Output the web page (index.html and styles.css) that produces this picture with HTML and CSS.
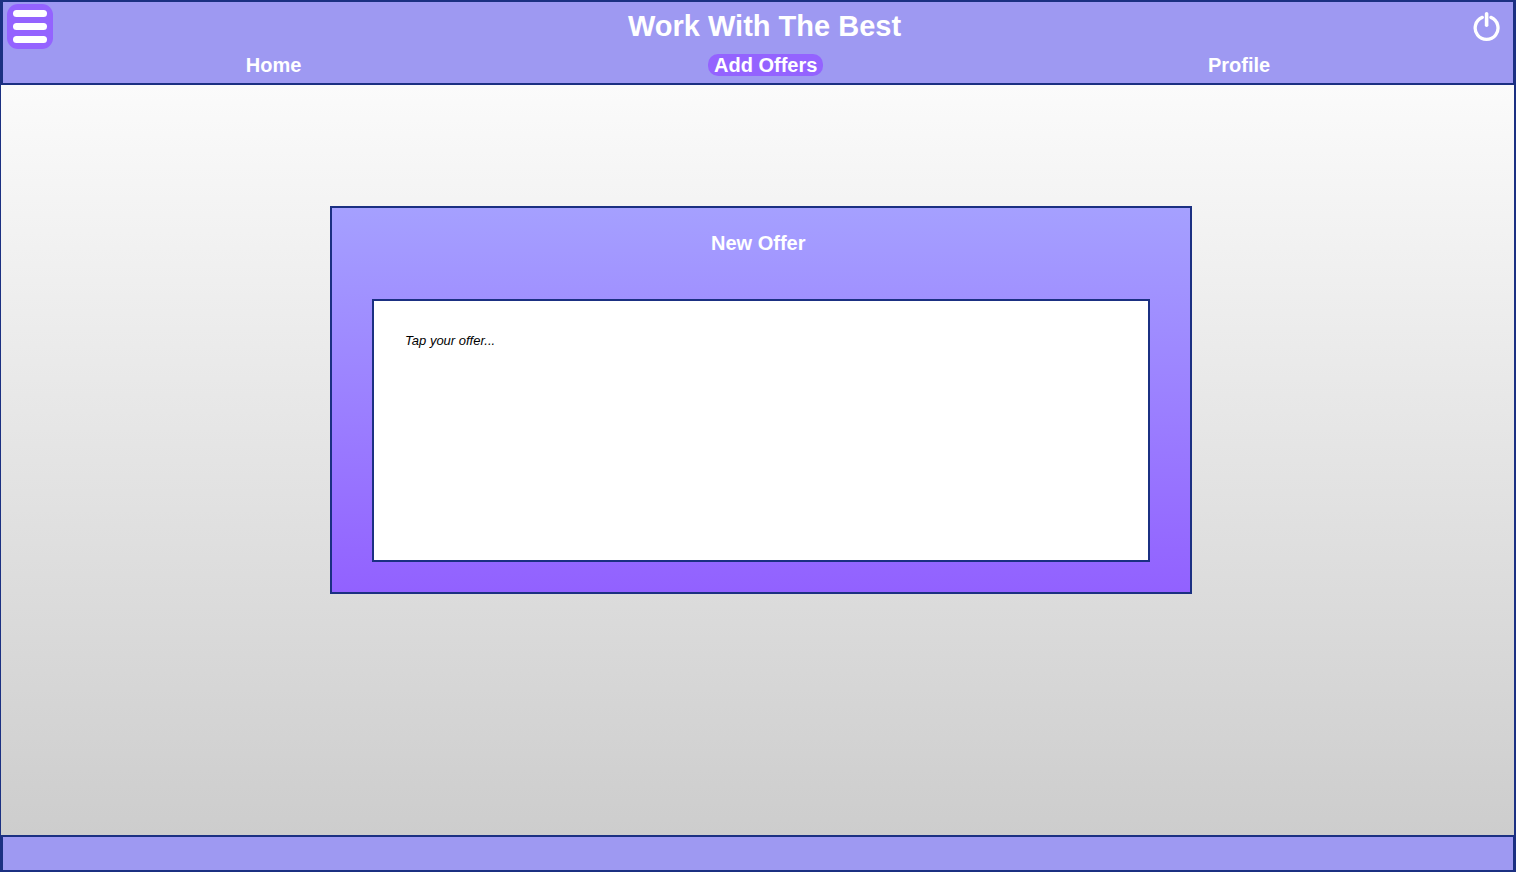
FILE: index.html
```html
<!DOCTYPE html>
<html lang="en">
<head>
<meta charset="utf-8">
<meta name="viewport" content="width=device-width, initial-scale=1">
<title>Work With The Best</title>
<link rel="stylesheet" href="styles.css">
</head>
<body class="page">
<header class="header">
  <div class="topbar">
    <button class="menu-button" type="button" aria-label="Menu">
      <span class="menu-bar"></span>
      <span class="menu-bar"></span>
      <span class="menu-bar"></span>
    </button>
    <h1 class="title">Work With The Best</h1>
    <button class="power-button" type="button" aria-label="Log out">
      <svg width="28" height="33" viewBox="0 0 28 33" fill="none" stroke="#fff" stroke-width="3.3" stroke-linecap="round">
        <path d="M9.3 7.4A11.4 11.4 0 1 0 17.9 7.4"/>
        <path d="M13.6 3.8V15.2" stroke-width="3.6"/>
      </svg>
    </button>
  </div>
  <nav class="nav">
    <a class="nav-link" href="#home">Home</a>
    <a class="nav-link nav-link-active" href="#offers" aria-current="page">Add Offers</a>
    <a class="nav-link" href="#profile">Profile</a>
  </nav>
</header>
<main class="main">
  <form class="card">
    <label class="card-title" for="offer">New Offer</label>
    <textarea class="offer" id="offer" placeholder="Tap your offer..."></textarea>
  </form>
</main>
<footer class="footer"></footer>
</body>
</html>
```
FILE: styles.css
```css
* {
  box-sizing: border-box;
}

.page {
  display: flex;
  flex-direction: column;
  min-height: 100vh;
  margin: 0;
  border: solid #1b3082;
  border-width: 0 2px 0 1px;
  font-family: "Liberation Sans", Arial, sans-serif;
}

.header {
  padding: 2px 4px 7px;
  border: 2px solid #1b3082;
  border-right-width: 1px;
  background: #9e99f2;
}

.topbar {
  display: flex;
  align-items: center;
}

.menu-button {
  display: flex;
  flex-direction: column;
  justify-content: space-between;
  width: 46px;
  height: 45px;
  padding: 6px;
  border: 0;
  border-radius: 11px;
  background: #9463ff;
}

.menu-bar {
  height: 7px;
  border-radius: 4px;
  background: #fff;
}

.title {
  flex: 1;
  margin: 0;
  padding: 0 0 2px 3px;
  color: #fff;
  font-size: 29px;
  line-height: 42px;
  text-align: center;
}

.power-button {
  display: flex;
  margin-right: 8px;
  padding: 0;
  border: 0;
  background: none;
}

.nav {
  display: flex;
  justify-content: space-between;
  padding: 5px 15.5% 0;
}

.nav-link {
  padding: 0 6px;
  border-radius: 10px;
  color: #fff;
  font-size: 20px;
  font-weight: bold;
  line-height: 22px;
  text-decoration: none;
}

.nav-link-active {
  margin-left: 22px;
  background: #9463ff;
}

.main {
  flex: 1;
  padding: 121px 0;
  background: linear-gradient(#fbfbfb, #cdcdcd);
}

.card {
  display: flex;
  flex-direction: column;
  width: 57%;
  margin-left: 21.75%;
  padding: 24px 40px 30px;
  border: 2px solid #1b3082;
  background: linear-gradient(#a5a0ff, #9261ff);
}

.card-title {
  padding-right: 6px;
  color: #fff;
  font-size: 20px;
  font-weight: bold;
  line-height: 22px;
  text-align: center;
}

.offer {
  height: 263px;
  margin-top: 45px;
  padding: 32px 31px;
  border: 2px solid #1b3082;
  border-radius: 0;
  background: #fff;
  color: #000;
  font: italic 13px/16px "Liberation Sans", Arial, sans-serif;
  resize: none;
}

.offer::placeholder {
  color: #000;
  opacity: 1;
}

.footer {
  height: 37px;
  border: 2px solid #1b3082;
  border-right-width: 1px;
  background: #9e99f2;
}
```
